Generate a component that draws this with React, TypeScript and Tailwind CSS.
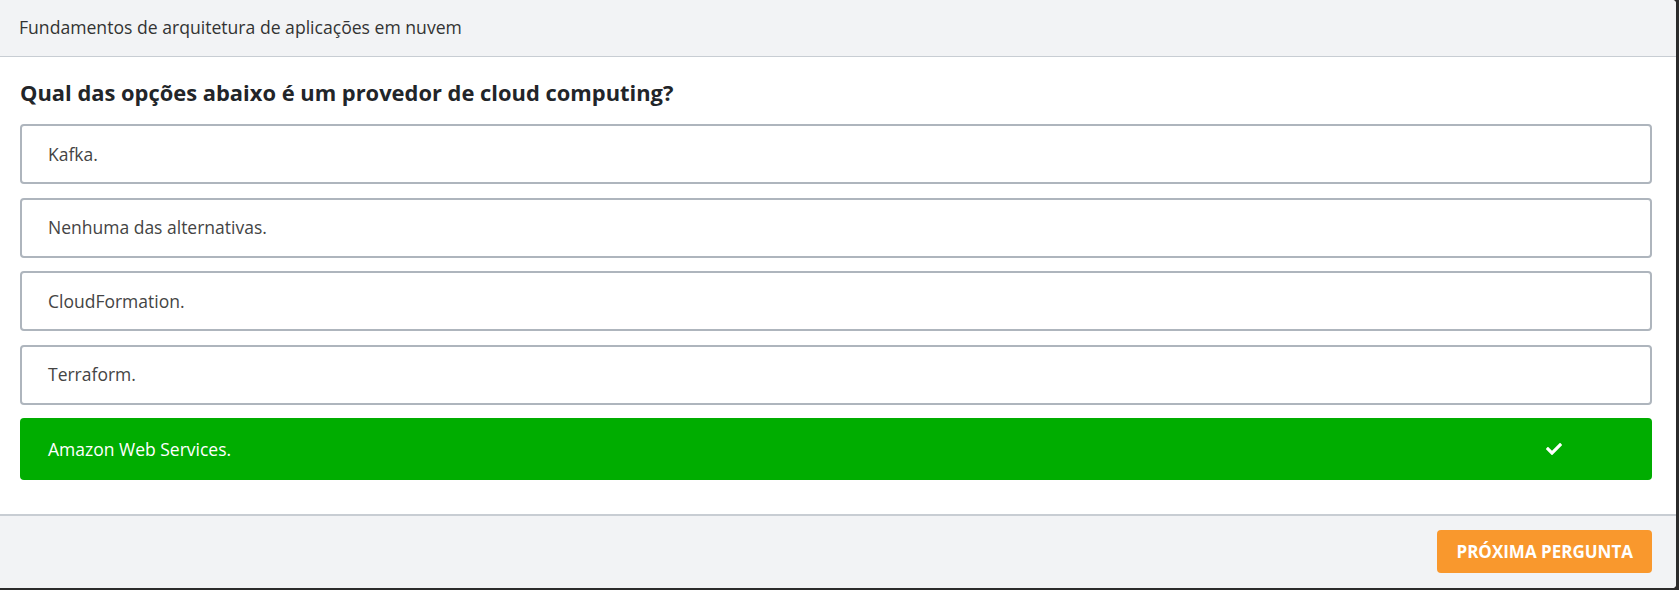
import { FaCheck } from "react-icons/fa";

const OPTIONS = [
  { label: "Kafka.", correct: false },
  { label: "Nenhuma das alternativas.", correct: false },
  { label: "CloudFormation.", correct: false },
  { label: "Terraform.", correct: false },
  { label: "Amazon Web Services.", correct: true },
];

export default function App() {
  return (
    <div
      className="w-[1679px] h-[590px] bg-[#2b2b2b] overflow-hidden"
      style={{ fontFamily: "'Open Sans', 'Noto Sans', sans-serif" }}
    >
      <div className="w-[1676px] h-[588px] bg-white rounded-r-[4px] overflow-hidden flex flex-col">
        {/* Header */}
        <div className="h-[57px] shrink-0 bg-[#f2f3f5] border-b border-[#c8cdd3] flex items-center px-[19px]">
          <span className="text-[17.6px] text-[#333] leading-none">
            Fundamentos de arquitetura de aplicações em nuvem
          </span>
        </div>

        {/* Body */}
        <div className="flex-1 pl-[20px] pr-[24px] pt-[22px]">
          <h2 className="text-[21.9px] font-bold text-[#222529] leading-[28px] h-[28px]">
            Qual das opções abaixo é um provedor de cloud computing?
          </h2>
          <div className="mt-[17px] flex flex-col gap-[13.5px]">
            {OPTIONS.map((o) =>
              o.correct ? (
                <div
                  key={o.label}
                  className="h-[62px] rounded-[4px] bg-[#00ad00] flex items-center justify-between pl-[28px] pr-[90px]"
                >
                  <span className="text-[17.5px] text-white">{o.label}</span>
                  <FaCheck className="text-white w-[16px] h-[16px]" />
                </div>
              ) : (
                <div
                  key={o.label}
                  className="h-[60px] rounded-[4px] border-2 border-[#aeb5bd] bg-white flex items-center pl-[26px]"
                >
                  <span className="text-[17.5px] text-[#444]">{o.label}</span>
                </div>
              )
            )}
          </div>
        </div>

        {/* Footer */}
        <div className="h-[74px] shrink-0 bg-[#f2f3f5] border-t-2 border-[#c8cdd3] flex items-start justify-end pr-[24px] pt-[14px]">
          <button className="h-[43px] px-[19px] rounded-[4px] bg-[#f9982d] text-white text-[17px] font-bold">
            PRÓXIMA PERGUNTA
          </button>
        </div>
      </div>
    </div>
  );
}
